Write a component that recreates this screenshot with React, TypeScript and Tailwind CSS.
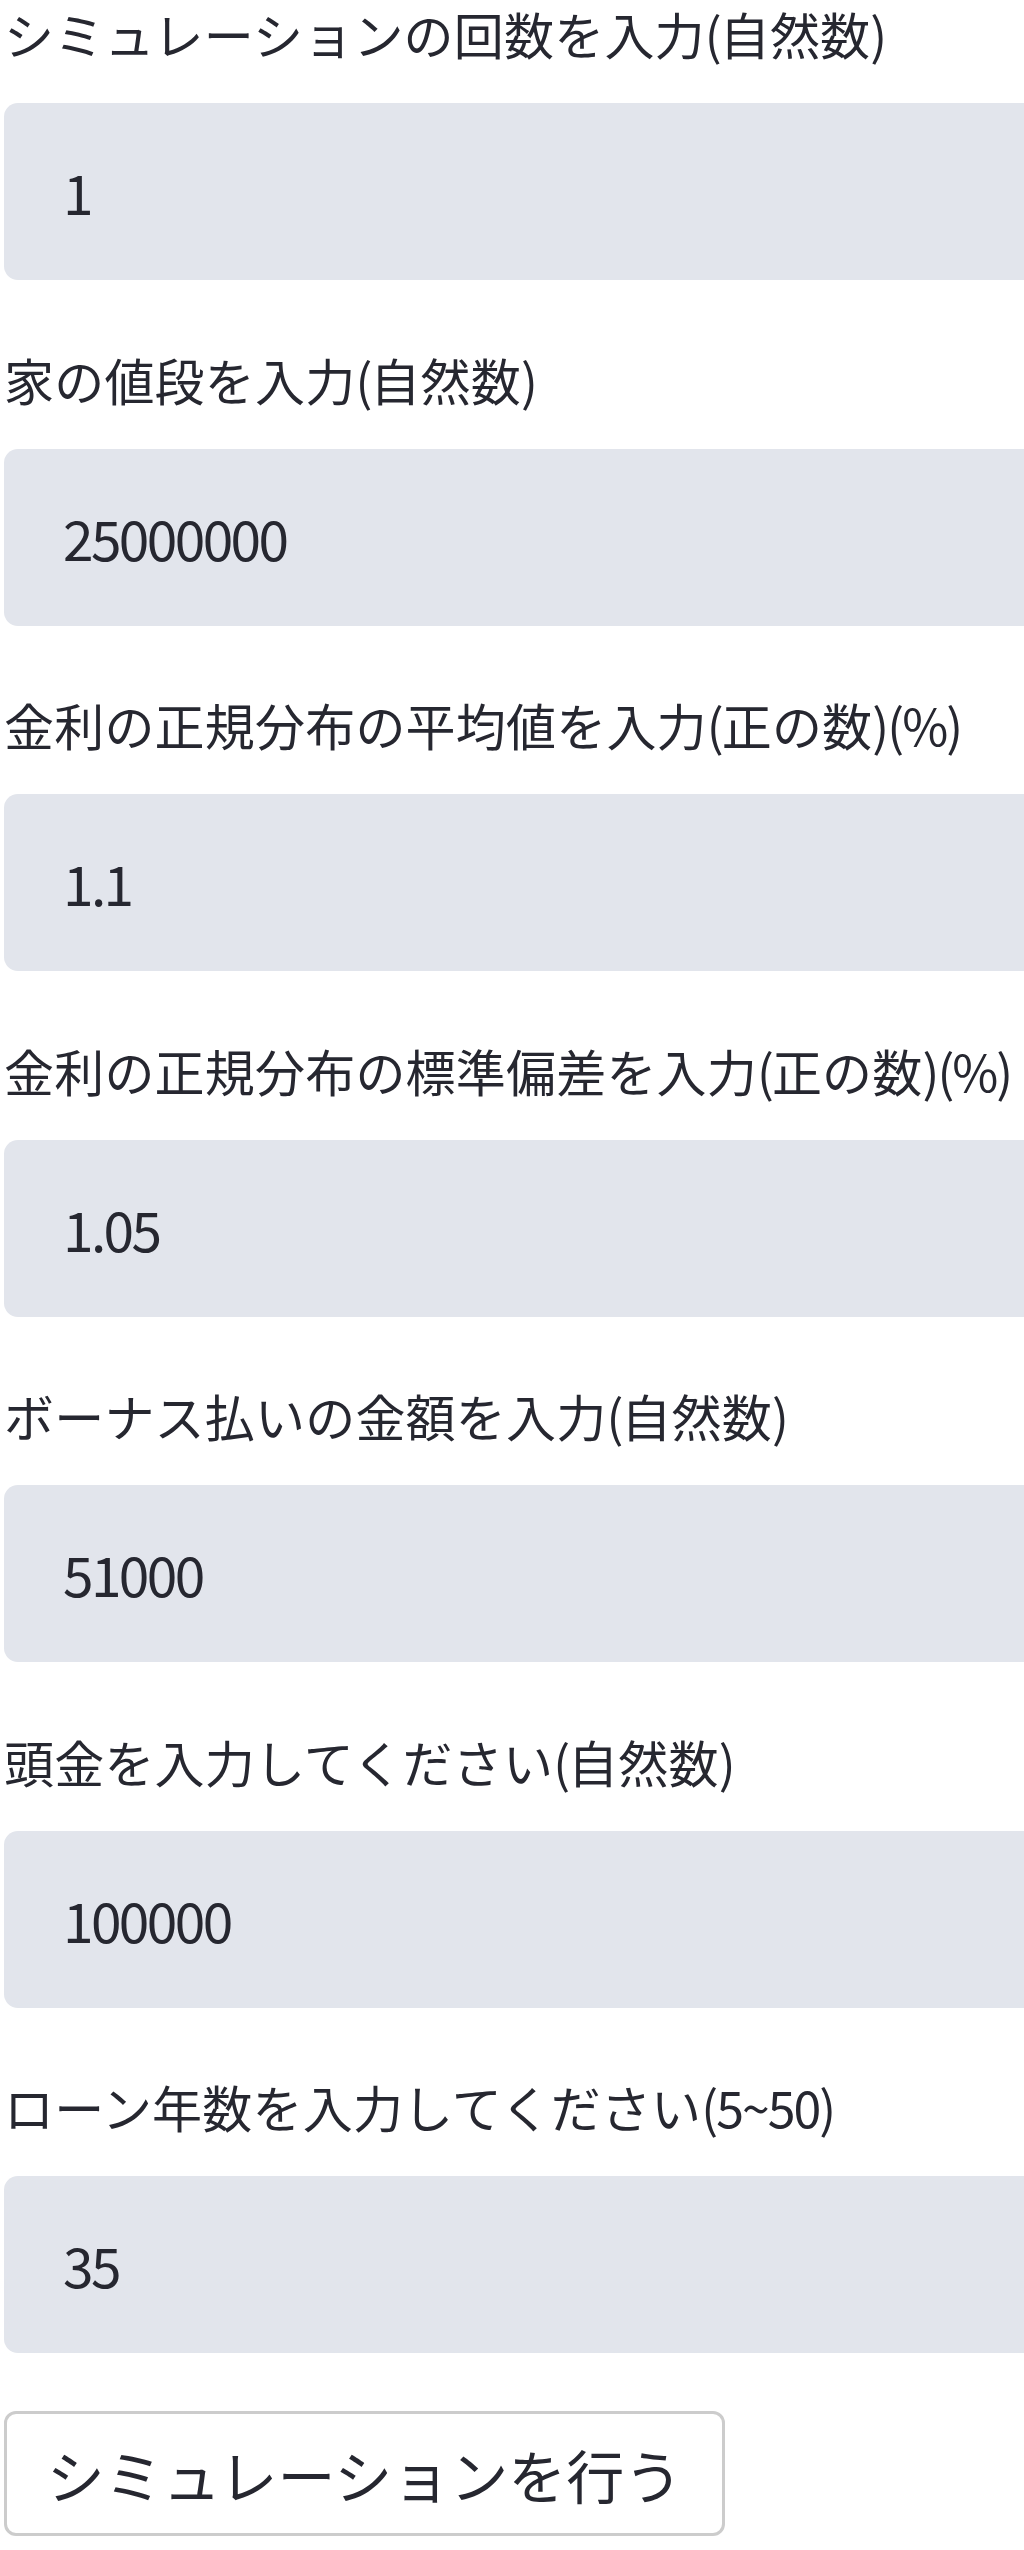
const fields = [
  { label: "シミュレーションの回数を入力(自然数)", value: "1" },
  { label: "家の値段を入力(自然数)", value: "25000000" },
  { label: "金利の正規分布の平均値を入力(正の数)(%)", value: "1.1" },
  { label: "金利の正規分布の標準偏差を入力(正の数)(%)", value: "1.05" },
  { label: "ボーナス払いの金額を入力(自然数)", value: "51000" },
  { label: "頭金を入力してください(自然数)", value: "100000" },
  { label: "ローン年数を入力してください(5~50)", value: "35" },
];

// latin runs in the labels are set a bit tighter than the CJK text
const LabelText = ({ text }: { text: string }) => {
  const parts = text.split(/([\x20-\x7e]+)/).filter((p) => p.length > 0);
  return (
    <>
      {parts.map((p, i) =>
        /^[\x20-\x7e]+$/.test(p) ? (
          <span key={i} className="inline-block tracking-[-2px]">
            {p}
          </span>
        ) : (
          <span key={i} className="inline-block tracking-[0.2px]">
            {p}
          </span>
        )
      )}
    </>
  );
};

const NumberField = ({ label, value }: { label: string; value: string }) => {
  return (
    <div className="flex flex-col">
      <label className="block h-[66px] text-[50px] leading-[66px] whitespace-nowrap">
        <LabelText text={label} />
      </label>
      <div className="mt-[37px] flex h-[177px] items-center rounded-l-[14px] bg-[#e2e5ec] pl-[59px]">
        <span className="text-[55px] leading-none tracking-[-2.6px]">{value}</span>
      </div>
    </div>
  );
};

export default function App() {
  return (
    <div
      className="min-h-screen overflow-hidden bg-white pl-[4px] text-[#262730]"
      style={{ fontFamily: '"Noto Sans CJK JP", "Noto Sans", sans-serif' }}
    >
      <div className="flex flex-col gap-[65.5px]">
        {fields.map((f) => (
          <NumberField key={f.label} label={f.label} value={f.value} />
        ))}
      </div>
      <button className="mt-[58px] flex h-[125px] w-[721px] items-center justify-center rounded-[12px] border-[3px] border-[#cccccc] bg-white text-[58px] leading-none text-[#262730]">
        シミュレーションを行う
      </button>
    </div>
  );
}
